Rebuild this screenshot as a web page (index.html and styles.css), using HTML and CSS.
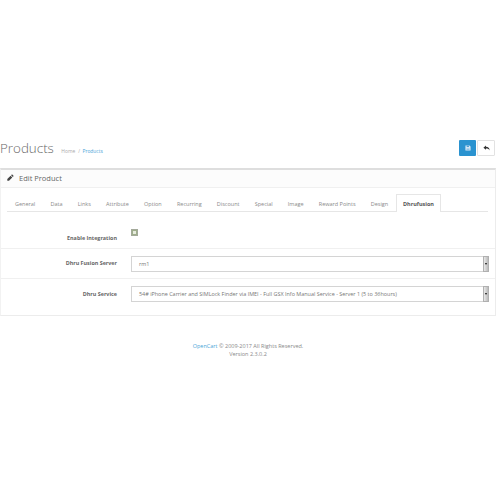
FILE: index.html
```html
<!DOCTYPE html>
<html lang="en">
<head>
<meta charset="utf-8">
<title>Edit Product</title>
<link rel="stylesheet" href="styles.css">
</head>
<body>
<div class="page-header">
  <div class="title-group">
    <h1>Products</h1>
    <div class="crumbs"><span>Home</span><span class="sep">/</span><a>Products</a></div>
  </div>
  <div class="actions">
    <div class="btn btn-primary">
      <svg width="6" height="6" viewBox="0 0 7 7"><path fill="#d5e8f6" d="M0.5 0.5h4.7l1.3 1.3v4.7h-6z"/><rect x="2" y="0.8" width="2.6" height="1.6" fill="#4b9fd5"/><rect x="1.7" y="4" width="3.6" height="2" fill="#8fc3e6"/></svg>
    </div>
    <div class="btn btn-default">
      <svg width="7" height="6" viewBox="0 0 8 7"><path fill="#333" d="M3.4 0.6v1.5c2.6 0 4.2 1.3 4.2 4.3C6.9 4.6 5.6 4 3.4 4v1.6L0.4 3.1z"/></svg>
    </div>
  </div>
</div>
<div class="panel">
  <div class="panel-heading">
    <svg class="pencil" width="7" height="7" viewBox="0 0 7 7"><path fill="#444" d="M5 0.3l1.7 1.7-0.9 0.9-1.7-1.7zM3.6 1.7l1.7 1.7-3.3 3.3H0.3V5z"/></svg>
    <span>Edit Product</span>
  </div>
  <div class="panel-body">
    <div class="tabs">
      <span class="tab">General</span>
      <span class="tab">Data</span>
      <span class="tab">Links</span>
      <span class="tab">Attribute</span>
      <span class="tab">Option</span>
      <span class="tab">Recurring</span>
      <span class="tab">Discount</span>
      <span class="tab">Special</span>
      <span class="tab">Image</span>
      <span class="tab">Reward Points</span>
      <span class="tab">Design</span>
      <span class="tab active">Dhrufusion</span>
    </div>
    <div class="row row-check">
      <label>Enable Integration</label>
      <div class="check"><i></i></div>
    </div>
    <div class="row row-select">
      <label>Dhru Fusion Server</label>
      <div class="select"><span>rm1</span><b></b></div>
    </div>
    <div class="row row-select last">
      <label>Dhru Service</label>
      <div class="select"><span>54# iPhone Carrier and SIMLock Finder via IMEI - Full GSX Info Manual Service - Server 1 (5 to 36hours)</span><b></b></div>
    </div>
  </div>
</div>
<footer>
  <div><a>OpenCart</a> © 2009-2017 All Rights Reserved.</div>
  <div>Version 2.3.0.2</div>
</footer>
</body>
</html>
```
FILE: styles.css
```css
* { box-sizing: border-box; }
html, body { margin: 0; padding: 0; background: #fff; }
body { width: 500px; height: 500px; overflow: hidden; font-family: "Open Sans", sans-serif; font-size: 5.5px; color: #777; }
.page-header { display: flex; justify-content: space-between; align-items: flex-start; padding: 140px 4px 0 0; height: 168px; }
.title-group { display: flex; align-items: baseline; gap: 7.5px; margin-top: -3px; }
h1 { margin: 0; font-size: 13.4px; line-height: 22px; font-weight: 300; color: #6a6a6a; }
.crumbs { font-size: 4.9px; color: #aaa; }
.crumbs .sep { margin: 0 2.5px 0 3px; }
.crumbs a, footer a { color: #4aa5d8; }
.actions { display: flex; gap: 1px; margin-right: 1px; }
.btn { display: flex; align-items: center; justify-content: center; height: 16px; border-radius: 1px; }
.btn-primary { width: 17px; background: #2a93d0; }
.btn-default { width: 18px; background: #fff; border: 1px solid #e2e2e2; }
.panel { width: 496px; height: 148px; border: 1px solid #ececec; border-top: 2px solid #dedede; border-left-color: #f2f2f2; }
.panel-heading { display: flex; align-items: center; height: 18px; padding: 0 0 2px 6px; background: #fcfcfc; border-bottom: 1px solid #f0f0f0; font-size: 7.5px; color: #666; }
.pencil { margin-right: 5px; }
.panel-body { padding: 6px 7px 0 6.4px; }
.tabs { display: flex; height: 18px; border-bottom: 1px solid #e6e6e6; white-space: nowrap; }
.tab { padding: 5px 6.6px 0 6.6px; line-height: 9px; height: 18px; color: #8a8a8a; border: 1px solid transparent; border-bottom: 0; }
.tab.active { padding: 5px 6.2px 0 6.2px; font-weight: 700; color: #555; background: #fff; border-color: #e6e6e6; }
.row { display: flex; border-bottom: 1px solid #f0f0f0; margin: 0 -7px 0 -6.4px; }
.row label { width: 116px; text-align: right; font-weight: 700; font-size: 5.4px; color: #666; line-height: 9px; flex: none; }
.row-check { height: 37px; padding-top: 17px; }
.row-check label { padding-top: 5px; }
.check { margin-left: 14px; width: 7px; height: 7px; background: #9fae8b; border: 1px solid #a3a99a; display: flex; align-items: center; justify-content: center; }
.check i { display: block; width: 3px; height: 3px; background: #e6ebdd; }
.row-select { height: 30px; align-items: center; }
.row-select.last { border-bottom: 0; height: 36px; padding-bottom: 6px; }
.select { display: flex; align-items: center; justify-content: space-between; margin-left: 14px; width: 358px; height: 16px; background: #fff; border: 1px solid #d4d4d4; padding-left: 7px; font-size: 5.44px; color: #777; }
.select b { position: relative; width: 6px; height: 16px; margin-right: -1px; background: linear-gradient(to right, #e8e8e8, #bbb); border: 1px solid #b0b0b0; }
.select b::after { content: ""; position: absolute; left: 1px; top: 6px; border: 1.5px solid transparent; border-top: 2px solid #111; border-bottom: 0; }
footer { margin-top: 26px; text-align: center; width: 496px; line-height: 8px; color: #888; }
```
